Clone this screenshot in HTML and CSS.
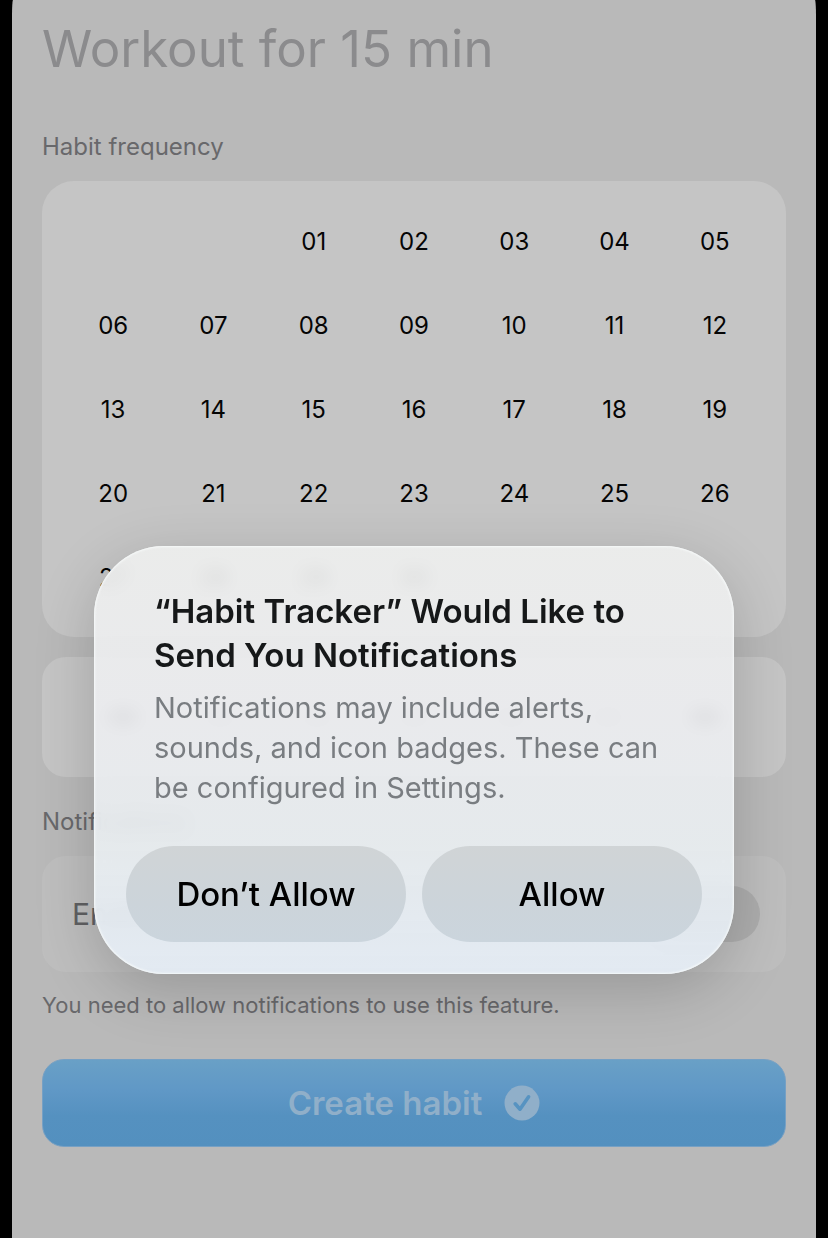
FILE: index.html
```html
<!DOCTYPE html>
<html lang="en">
<head>
<meta charset="utf-8">
<meta name="viewport" content="width=device-width, initial-scale=1">
<title>Habit Tracker</title>
<link rel="stylesheet" href="styles.css">
</head>
<body>
<div class="screen">
  <main class="form">
    <input class="habit-name" type="text" placeholder="Workout for 15 min" aria-label="Habit name">

    <h2 class="label">Habit frequency</h2>
    <section class="card calendar-card">
      <table class="calendar" aria-label="Days of the month">
        <tbody>
          <tr><td></td><td></td><td>01</td><td>02</td><td>03</td><td>04</td><td>05</td></tr>
          <tr><td>06</td><td>07</td><td>08</td><td>09</td><td>10</td><td>11</td><td>12</td></tr>
          <tr><td>13</td><td>14</td><td>15</td><td>16</td><td>17</td><td>18</td><td>19</td></tr>
          <tr><td>20</td><td>21</td><td>22</td><td>23</td><td>24</td><td>25</td><td>26</td></tr>
          <tr><td>27</td><td>28</td><td>29</td><td>30</td><td></td><td></td><td></td></tr>
        </tbody>
      </table>
    </section>
    <section class="card week-card" aria-hidden="true">
      <span class="mark mark-strong"></span><span class="mark"></span><span class="mark"></span><span class="mark"></span><span class="mark"></span><span class="mark"></span><span class="mark mark-strong"></span>
    </section>

    <h2 class="label label-spaced">Notifications</h2>
    <section class="card toggle-card">
      <label for="notify">Enable</label>
      <input class="switch" id="notify" type="checkbox" disabled>
    </section>
    <p class="note">You need to allow notifications to use this feature.</p>

    <button class="create" type="button" disabled>
      <span>Create habit</span>
      <svg class="create-icon" viewBox="0 0 36 36" aria-hidden="true">
        <circle cx="18" cy="18" r="17.5" fill="currentColor"/>
        <path d="M11.2 18.8 16 24.2 24.6 11.8" fill="none" stroke="#5793c1" stroke-width="3.6" stroke-linecap="round" stroke-linejoin="round"/>
      </svg>
    </button>
  </main>

  <div class="overlay">
    <div class="alert" role="alertdialog" aria-labelledby="alert-title" aria-describedby="alert-text">
      <div class="alert-copy">
        <h1 class="alert-title" id="alert-title">“Habit Tracker” Would Like to Send You Notifications</h1>
        <p class="alert-text" id="alert-text">Notifications may include alerts, sounds, and icon badges. These can be configured in Settings.</p>
      </div>
      <div class="alert-actions">
        <button class="alert-button" type="button">Don’t Allow</button>
        <button class="alert-button" type="button">Allow</button>
      </div>
    </div>
  </div>
</div>
</body>
</html>
```
FILE: styles.css
```css
* {
  box-sizing: border-box;
}

body {
  margin: 0;
  padding: 0 12px;
  background: #000;
  font-family: Inter, "Liberation Sans", sans-serif;
}

h1, h2, p {
  margin: 0;
  font-weight: 400;
}

button, input {
  font: inherit;
}

.screen {
  position: relative;
  min-height: 100vh;
  background: #b9b9b9;
  border-radius: 1px 1px 0 0 / 16px 16px 0 0;
}

.form {
  display: flex;
  flex-direction: column;
  padding: 17px 30px 90px;
}

.habit-name {
  width: 100%;
  height: 64px;
  margin-bottom: 51px;
  padding: 0;
  border: 0;
  background: none;
  font-size: 51px;
  line-height: 64px;
}

.habit-name::placeholder {
  color: #8b8b8d;
  opacity: 1;
}

.label,
.note {
  color: #68686b;
  font-size: 24px;
  line-height: 30px;
}

.label {
  margin-bottom: 19px;
}

.label-spaced {
  margin-top: 30px;
}

.card {
  background: #c5c5c5;
  border-radius: 24px;
}

.calendar-card {
  padding: 18px 21px;
  border-radius: 32px;
}

.calendar {
  width: 100%;
  table-layout: fixed;
  border-collapse: collapse;
}

.calendar td {
  height: 84px;
  padding: 0;
  color: #050505;
  font-size: 24px;
  text-align: center;
}

.week-card {
  display: flex;
  justify-content: space-between;
  align-items: center;
  height: 120px;
  margin-top: 20px;
  padding: 0 66px;
}

.mark {
  width: 30px;
  height: 16px;
  border-radius: 8px;
  background: #b6b6b6;
}

.mark-strong {
  background: #777;
}

.toggle-card {
  display: flex;
  justify-content: space-between;
  align-items: center;
  height: 116px;
  padding: 0 26px 0 30px;
  background: #bebebe;
  color: #606062;
  font-size: 30px;
}

.switch {
  appearance: none;
  width: 110px;
  height: 56px;
  margin: 0;
  border-radius: 28px;
  background: #adadad;
}

.note {
  margin-top: 18px;
  font-size: 22px;
}

.create {
  display: flex;
  justify-content: center;
  align-items: center;
  gap: 22px;
  height: 88px;
  margin-top: 39px;
  border: 1px solid #76a0c4;
  border-radius: 22px;
  background: linear-gradient(#69a0c6, #6098c6 35%, #5591c0 65%, #5390bf);
  color: #90afc9;
  font-size: 33px;
  font-weight: 600;
}

.create-icon {
  width: 36px;
  height: 36px;
}

.overlay {
  position: absolute;
  inset: 0;
  display: flex;
  justify-content: center;
  align-items: flex-start;
  padding: 546px 20px 0;
}

.alert {
  width: 100%;
  max-width: 640px;
  padding: 43px 32px 32px;
  border-radius: 70px;
  background: linear-gradient(rgba(240, 241, 240, 0.88), rgba(238, 239, 242, 0.88) 40%, rgba(235, 240, 243, 0.88) 70%, rgba(229, 237, 246, 0.92));
  backdrop-filter: blur(8px);
  box-shadow: inset 0 0 2px 1px rgba(247, 251, 251, 0.9), 0 16px 60px rgba(0, 0, 0, 0.18);
}

.alert-copy {
  padding: 0 28px;
}

.alert-title {
  color: #161819;
  font-size: 33px;
  font-weight: 600;
  line-height: 44px;
}

.alert-text {
  margin-top: 11px;
  color: #797d81;
  font-size: 29px;
  line-height: 40px;
}

.alert-actions {
  display: grid;
  grid-template-columns: 1fr 1fr;
  gap: 16px;
  margin-top: 38px;
}

.alert-button {
  height: 96px;
  padding: 0;
  border: 0;
  border-radius: 48px;
  background: linear-gradient(#d0d4d6, #ccd4da 60%, #cbd5dd);
  color: #000;
  font-size: 33px;
  font-weight: 500;
}
```
